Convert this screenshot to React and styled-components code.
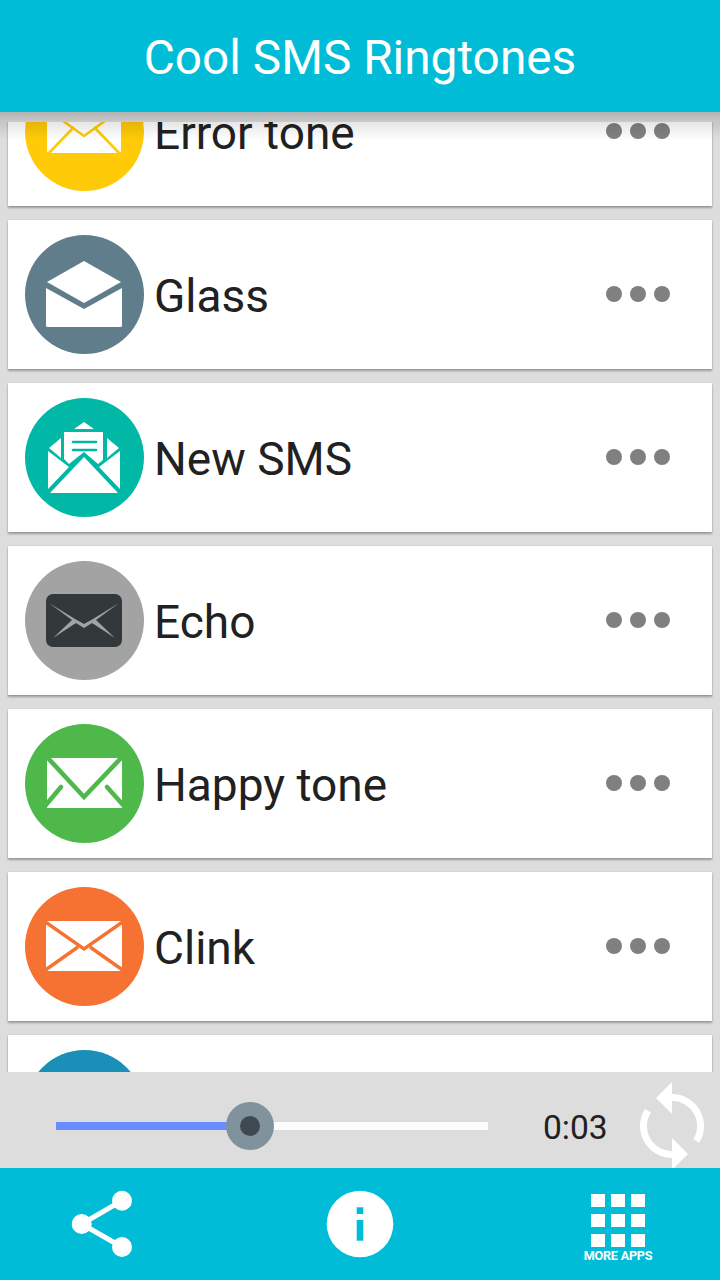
import React from 'react';
import styled, { createGlobalStyle } from 'styled-components';

const Global = createGlobalStyle`
  html, body { margin: 0; padding: 0; }
  body { font-family: Roboto, "Liberation Sans", sans-serif; background: #dddddd; }
`;

const Screen = styled.div`
  width: 720px;
  height: 1280px;
  display: flex;
  flex-direction: column;
  overflow: hidden;
  background: #dddddd;
`;

const Header = styled.header`
  position: relative;
  z-index: 2;
  flex: 0 0 112px;
  display: flex;
  align-items: center;
  justify-content: center;
  background: #00bcd6;
  color: #fff;
  font-size: 47.8px;
  padding-top: 3px;
  box-sizing: border-box;
  &::before {
    content: "";
    position: absolute;
    left: 0;
    right: 0;
    top: 100%;
    height: 10px;
    background: linear-gradient(#b2b2b2, #cacaca);
  }
  &::after {
    content: "";
    position: absolute;
    left: 0;
    right: 0;
    top: 122px;
    height: 18px;
    background: linear-gradient(rgba(0, 0, 0, 0.1), rgba(0, 0, 0, 0));
  }
`;

const List = styled.div`
  flex: 1;
  min-height: 0;
  overflow: hidden;
  display: flex;
  flex-direction: column;
  gap: 14px;
  padding: 0 8px;
`;

const Row = styled.div`
  flex: 0 0 149px;
  display: flex;
  align-items: center;
  background: #fff;
  box-shadow: 0 2px 2px rgba(0, 0, 0, 0.3), 0 0 1px rgba(0, 0, 0, 0.2);
  padding-left: 17px;
  padding-right: 42px;
  &:first-child { margin-top: -55px; }
`;

const Badge = styled.div`
  width: 119px;
  height: 119px;
  border-radius: 50%;
  background: ${p => p.$color};
  flex: none;
  margin-top: -1px;
  svg { display: block; width: 119px; height: 119px; }
`;

const Title = styled.div`
  flex: 1;
  margin-left: 10px;
  padding-top: 2px;
  font-size: 46px;
  color: #212121;
`;

const Dots = styled.div`
  display: flex;
  gap: 8px;
  margin-top: -2px;
`;

const Dot = styled.span`
  width: 16px;
  height: 16px;
  border-radius: 50%;
  background: #808080;
`;

const Player = styled.div`
  flex: 0 0 96px;
  position: relative;
  z-index: 1;
  display: flex;
  align-items: center;
  background: #dddddd;
  padding-left: 56px;
`;

const Track = styled.div`
  position: relative;
  width: 432px;
  height: 8px;
  background: #fcfcfc;
  margin-top: 12px;
`;

const Progress = styled.div`
  height: 100%;
  background: #6a8cff;
`;

const Thumb = styled.div`
  position: absolute;
  top: -20px;
  width: 48px;
  height: 48px;
  margin-left: -24px;
  border-radius: 50%;
  background: #80939d;
  display: flex;
  align-items: center;
  justify-content: center;
  &::after {
    content: "";
    width: 20px;
    height: 20px;
    border-radius: 50%;
    background: #3e4a50;
  }
`;

const Time = styled.div`
  margin-left: 55px;
  margin-top: 15px;
  font-size: 33.6px;
  color: #212121;
  width: 64px;
`;

const Repeat = styled.svg`
  position: absolute;
  left: 636px;
  top: 8px;
  width: 72px;
  height: 88px;
`;

const BottomBar = styled.nav`
  flex: 0 0 112px;
  position: relative;
  display: grid;
  grid-template-columns: 204px 1fr 204px;
  background: #00bcd6;
`;

const BarButton = styled.div`
  display: flex;
  flex-direction: column;
  align-items: center;
  padding-top: 22px;
  svg { display: block; }
`;

const AppsGrid = styled.div`
  display: grid;
  grid-template-columns: repeat(3, 14px);
  grid-auto-rows: 13px;
  gap: 7px 6px;
  margin-top: 4px;
  span { background: #fff; }
`;

const AppsLabel = styled.div`
  color: #fff;
  font-size: 12.6px;
  line-height: 14px;
  font-weight: 700;
  margin-top: 2px;
  white-space: nowrap;
  letter-spacing: -0.2px;
`;

const ErrorIcon = () => (
  <g>
    <rect x="22" y="36" width="74" height="45" rx="2" fill="#fff" />
    <path
      d="M20 36 L59 64 L98 36 M23 82 L49 55 M95 82 L69 55"
      fill="none"
      stroke="#ffca08"
      strokeWidth="2.6"
    />
  </g>
);

const GlassIcon = () => (
  <g fill="#fff">
    <path d="M59 26 L96 47 L59 68 L22 47 Z" />
    <path d="M21 53 L59 74 L97 53 L97 91 Q97 92 95 92 L23 92 Q21 92 21 91 Z" />
  </g>
);

const NewSmsIcon = () => (
  <g>
    <path d="M59 24 L69 31 L49 31 Z" fill="#fff" />
    <path d="M36 40 L24 50 L36 60 Z M82 40 L94 50 L82 60 Z" fill="#fff" />
    <path d="M39 34 H78 V62 L73 66 L59 54 L44 66 L39 61 Z" fill="#fff" />
    <path d="M48 44 H71 M48 52 H71" stroke="#00b8a5" strokeWidth="2.6" strokeLinecap="round" />
    <path d="M23 53 L44 69 L23 91 Z M95 53 L74 69 L95 91 Z" fill="#fff" />
    <path d="M59 59 L93 95 L25 95 Z" fill="#fff" />
  </g>
);

const EchoIcon = () => (
  <g>
    <rect x="21" y="33" width="76" height="53" rx="7" fill="#33383a" />
    <path
      d="M24 42 L50 58 L59 63 L68 58 L94 42 L71 59 L90 77 L67 62 L59 67 L51 62 L28 77 L47 59 Z"
      fill="#a3a3a3"
    />
  </g>
);

const HappyIcon = () => (
  <g>
    <rect x="22" y="34" width="75" height="50" fill="#fff" />
    <path
      d="M22 33 L59 73 L97 33"
      fill="none"
      stroke="#4fb84a"
      strokeWidth="4.6"
    />
    <path
      d="M20 82 L36 63 M99 82 L82 63"
      fill="none"
      stroke="#4fb84a"
      strokeWidth="4.6"
      strokeLinecap="round"
    />
  </g>
);

const ClinkIcon = () => (
  <g>
    <rect x="21" y="34" width="76" height="50" fill="#fff" />
    <path
      d="M19 34 L59 62 L99 34 M19 84 L53 60 M99 84 L65 60"
      fill="none"
      stroke="#f67233"
      strokeWidth="3.4"
    />
  </g>
);

const tones = [
  { name: 'Error tone', color: '#ffca08', icon: <ErrorIcon /> },
  { name: 'Glass', color: '#607d8b', icon: <GlassIcon /> },
  { name: 'New SMS', color: '#00b8a5', icon: <NewSmsIcon /> },
  { name: 'Echo', color: '#a3a3a3', icon: <EchoIcon /> },
  { name: 'Happy tone', color: '#4fb84a', icon: <HappyIcon /> },
  { name: 'Clink', color: '#f67233', icon: <ClinkIcon /> },
  { name: '', color: '#1a90b8', icon: null },
];

const ToneRow = ({ tone }) => (
  <Row>
    <Badge $color={tone.color}>
      <svg viewBox="0 0 119 119">{tone.icon}</svg>
    </Badge>
    <Title>{tone.name}</Title>
    <Dots><Dot /><Dot /><Dot /></Dots>
  </Row>
);

const App = () => (
  <>
    <Global />
    <Screen>
      <Header>Cool SMS Ringtones</Header>
      <List>
        {tones.map((t, i) => <ToneRow key={i} tone={t} />)}
      </List>
      <Player>
        <Track>
          <Progress style={{ width: `${(194 / 432) * 100}%` }} />
          <Thumb style={{ left: `${(194 / 432) * 100}%` }} />
        </Track>
        <Time>0:03</Time>
        <Repeat viewBox="0 0 72 88">
          <path d="M36 17.5 A28.5 28.5 0 0 1 60.3 61" fill="none" stroke="#fff" strokeWidth="7" />
          <path d="M12 30.6 A28.5 28.5 0 0 0 36 74.5" fill="none" stroke="#fff" strokeWidth="7" />
          <path d="M36 2 L20 18 L36 34 Z" fill="#fff" />
          <path d="M36 58 L52 74 L36 90 Z" fill="#fff" />
        </Repeat>
      </Player>
      <BottomBar>
        <BarButton>
          <svg width="64" height="68" viewBox="0 0 64 68">
            <path d="M11.7 34 L52 10.7 M11.7 34 L52 57" stroke="#fff" strokeWidth="5" />
            <circle cx="11.7" cy="34" r="10" fill="#fff" />
            <circle cx="52" cy="10.7" r="10" fill="#fff" />
            <circle cx="52" cy="57" r="10" fill="#fff" />
          </svg>
        </BarButton>
        <BarButton>
          <svg width="68" height="68" viewBox="0 0 68 68">
            <circle cx="34" cy="34" r="33.3" fill="#fff" />
            <rect x="30.7" y="17.3" width="6.6" height="6.7" fill="#00bcd6" />
            <rect x="30.7" y="30" width="6.6" height="20.7" fill="#00bcd6" />
          </svg>
        </BarButton>
        <BarButton>
          <AppsGrid>{Array.from({ length: 9 }).map((_, i) => <span key={i} />)}</AppsGrid>
          <AppsLabel>MORE APPS</AppsLabel>
        </BarButton>
      </BottomBar>
    </Screen>
  </>
);

export default App;
